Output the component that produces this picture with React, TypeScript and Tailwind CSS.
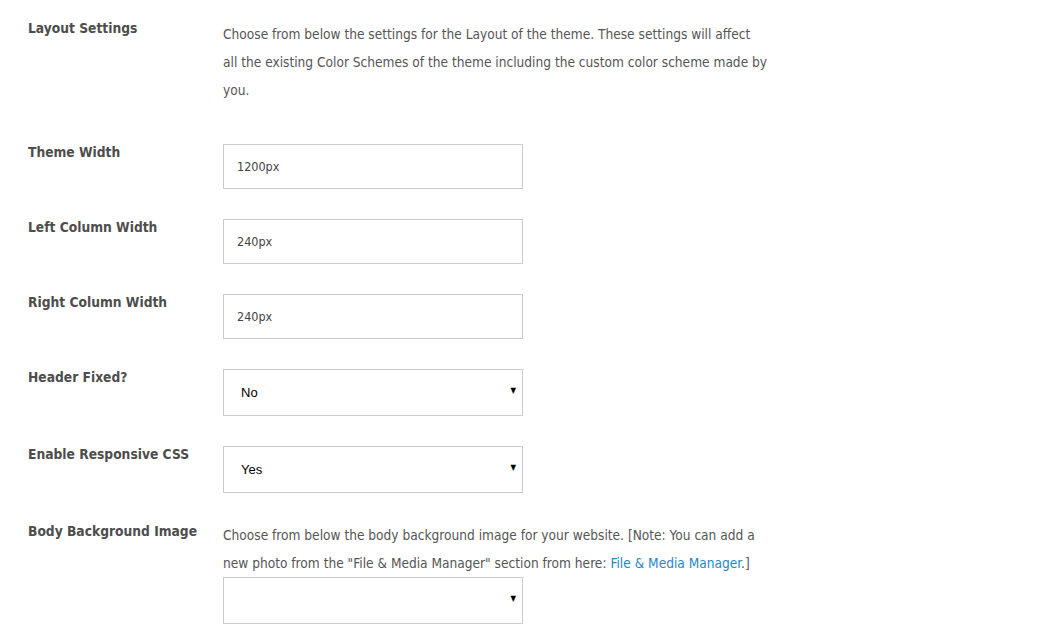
import React from "react";

const font = { fontFamily: '"DejaVu Sans Condensed", "DejaVu Sans", Tahoma, sans-serif' };

function Label({ children }: { children: React.ReactNode }) {
  return (
    <div className="w-[195px] shrink-0 text-[13.7px] leading-[16px] font-bold text-[#4d4d4d]">
      {children}
    </div>
  );
}

function TextInput({ value }: { value: string }) {
  return (
    <input
      readOnly
      value={value}
      className="w-[300px] h-[45px] border border-[#cccccc] bg-white px-[13px] text-[12.5px] text-[#444] outline-none"
      style={font}
    />
  );
}

function Select({ value }: { value: string }) {
  return (
    <div className="relative w-[300px] h-[47px] border border-[#cccccc] bg-white">
      <div className="pl-[17px] leading-[45px] text-[13px] text-black font-['Liberation_Sans',Arial,sans-serif]">
        {value}
      </div>
      <span className="absolute right-[6px] top-[17px] text-[8px] leading-none text-black">▼</span>
    </div>
  );
}

export default function App() {
  return (
    <div className="min-h-screen bg-white text-[#555]" style={font}>
      <div className="flex flex-col gap-[30px] pl-[28px] pt-[20px]">
        {/* Layout intro */}
        <div className="flex mb-[10px]">
          <Label>Layout Settings</Label>
          <p className="whitespace-nowrap text-[13.6px] leading-[28px]">
            Choose from below the settings for the Layout of the theme. These settings will affect
            <br />
            all the existing Color Schemes of the theme including the custom color scheme made by
            <br />
            you.
          </p>
        </div>

        <div className="flex">
          <Label>Theme Width</Label>
          <TextInput value="1200px" />
        </div>

        <div className="flex">
          <Label>Left Column Width</Label>
          <TextInput value="240px" />
        </div>

        <div className="flex">
          <Label>Right Column Width</Label>
          <TextInput value="240px" />
        </div>

        <div className="flex">
          <Label>Header Fixed?</Label>
          <Select value="No" />
        </div>

        <div className="flex">
          <Label>Enable Responsive CSS</Label>
          <Select value="Yes" />
        </div>

        <div className="flex">
          <Label>Body Background Image</Label>
          <div>
            <p className="whitespace-nowrap text-[13.6px] leading-[28px] -mt-[2px]">
              Choose from below the body background image for your website. [Note: You can add a
              <br />
              new photo from the "File &amp; Media Manager" section from here:{" "}
              <a href="#" className="text-[#1e87c8]">File &amp; Media Manager</a>.]
            </p>
            <Select value="" />
          </div>
        </div>
      </div>
    </div>
  );
}
